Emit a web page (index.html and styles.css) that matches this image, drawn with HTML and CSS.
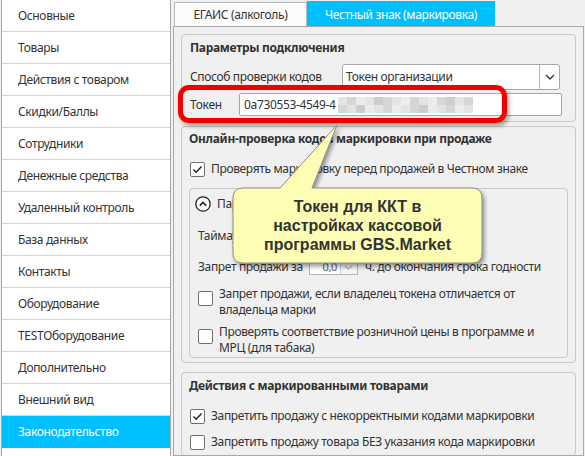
FILE: index.html
```html
<!DOCTYPE html>
<html lang="ru">
<head>
<meta charset="utf-8">
<link rel="stylesheet" href="styles.css">
</head>
<body>
<div class="app">
  <nav class="side">
    <div class="item">Основные</div>
    <div class="item">Товары</div>
    <div class="item">Действия с товаром</div>
    <div class="item">Скидки/Баллы</div>
    <div class="item">Сотрудники</div>
    <div class="item">Денежные средства</div>
    <div class="item">Удаленный контроль</div>
    <div class="item">База данных</div>
    <div class="item">Контакты</div>
    <div class="item">Оборудование</div>
    <div class="item">TESTОборудование</div>
    <div class="item">Дополнительно</div>
    <div class="item">Внешний вид</div>
    <div class="item sel">Законодательство</div>
  </nav>
  <main class="main">
    <div class="tabs">
      <div class="tab">ЕГАИС (алкоголь)</div>
      <div class="tab act">Честный знак (маркировка)</div>
    </div>
    <div class="panel">
      <section class="grp g1">
        <div class="gt">Параметры подключения</div>
        <div class="row r-combo">
          <span class="lbl lbl-w1">Способ проверки кодов</span>
          <div class="combo">
            <span class="combo-val">Токен организации</span>
            <span class="dd"><svg width="10" height="6" viewBox="0 0 10 6"><polyline points="1,1 5,5 9,1" fill="none" stroke="#333" stroke-width="1.4"/></svg></span>
          </div>
        </div>
        <div class="row r-token">
          <span class="lbl lbl-w2">Токен</span>
          <div class="input">0a730553-4549-4<span class="blur"><i class="c1"></i><i class="c2"></i><i class="c3"></i><i class="c1"></i><i class="c4"></i><i class="c2"></i><i class="c1"></i><i class="c3"></i><i class="c2"></i><i class="c1"></i><i class="c3"></i><i class="c2"></i><i class="c4"></i><i class="c1"></i><i class="c2"></i><i class="c2"></i><i class="c1"></i><i class="c4"></i><i class="c3"></i><i class="c1"></i><i class="c2"></i><i class="c3"></i><i class="c1"></i><i class="c2"></i><i class="c4"></i><i class="c3"></i><i class="c1"></i><i class="c2"></i><i class="c3"></i><i class="c1"></i></span></div>
        </div>
      </section>

      <section class="grp g2">
        <div class="gt">Онлайн-проверка кодов маркировки при продаже</div>
        <div class="row crow first">
          <span class="cb on"><svg width="11" height="9" viewBox="0 0 11 9"><polyline points="1.5,4.5 4.2,7.2 9.5,1.5" fill="none" stroke="#222" stroke-width="1.4"/></svg></span>
          <span>Проверять маркировку перед продажей в Честном знаке</span>
        </div>
        <div class="inner">
          <div class="row exp">
            <span class="circ"><svg width="16" height="16" viewBox="0 0 16 16"><circle cx="8" cy="8" r="7.2" fill="#fff" stroke="#222" stroke-width="1.3"/><polyline points="4.8,9.6 8,6.4 11.2,9.6" fill="none" stroke="#222" stroke-width="1.6"/></svg></span>
            <span>Параметры</span>
          </div>
          <div class="row tm">Таймаут</div>
          <div class="row zp">
            <span>Запрет продажи за</span>
            <span class="spin"><span class="spin-val">0,0</span><span class="spin-btn"><svg width="9" height="5" viewBox="0 0 9 5"><polyline points="1,1 4.5,4 8,1" fill="none" stroke="#b0b0b0" stroke-width="1.3"/></svg></span></span>
            <span>ч. до окончания срока годности</span>
          </div>
          <div class="row mrow cb2">
            <span class="cb top"></span>
            <span>Запрет продажи, если владелец токена отличается от<br>владельца марки</span>
          </div>
          <div class="row mrow cb3">
            <span class="cb top"></span>
            <span>Проверять соответствие розничной цены в программе и<br>МРЦ (для табака)</span>
          </div>
        </div>
      </section>

      <section class="grp g3">
        <div class="gt">Действия с маркированными товарами</div>
        <div class="row crow first">
          <span class="cb on"><svg width="11" height="9" viewBox="0 0 11 9"><polyline points="1.5,4.5 4.2,7.2 9.5,1.5" fill="none" stroke="#222" stroke-width="1.4"/></svg></span>
          <span>Запретить продажу с некорректными кодами маркировки</span>
        </div>
        <div class="row crow second">
          <span class="cb"></span>
          <span>Запретить продажу товара БЕЗ указания кода маркировки</span>
        </div>
      </section>
    </div>
  </main>

  <div class="highlight"></div>
  <div class="callout">
    <svg class="callout-shape" width="265" height="150" viewBox="0 0 265 150">
      <path d="M15,68 L52,68 L109,5 L84,68 L244,68 Q254,68 254,78 L254,133 Q254,143 244,143 L15,143 Q5,143 5,133 L5,78 Q5,68 15,68 Z" fill="#fdfdb4" stroke="#8c8c8c" stroke-width="1"/>
    </svg>
    <div class="callout-text">Токен для ККТ в<br>настройках кассовой<br>программы GBS.Market</div>
  </div>
</div>
</body>
</html>
```

FILE: styles.css
```css
* { box-sizing: border-box; }

body {
  margin: 0;
  width: 585px;
  height: 456px;
  overflow: hidden;
  background: #f0f0f0;
  font-family: "Noto Sans", "Open Sans", sans-serif;
  font-size: 12px;
  letter-spacing: -0.35px;
  color: #333;
}

.app {
  position: relative;
  display: flex;
  height: 456px;
}

.side {
  flex: none;
  width: 170px;
  margin-left: 1px;
  border-left: 1px solid #a9a9a9;
  border-right: 1px solid #a9a9a9;
  background: #fff;
}

.item {
  height: 32px;
  border-bottom: 1px solid #d6d6d6;
  padding-left: 16px;
  display: flex;
  align-items: center;
  white-space: nowrap;
}

.item.sel {
  background: #00bfff;
  color: #fff;
  border-bottom-color: #00bfff;
}

.main {
  flex: 1;
  min-width: 0;
  margin-left: 2px;
  display: flex;
  flex-direction: column;
}

.tabs {
  display: flex;
  align-items: flex-end;
  height: 26px;
  padding-left: 1px;
}

.tab {
  width: 133px;
  height: 24px;
  border: 1px solid #b9b9b9;
  border-bottom: none;
  background: #fbfbfb;
  display: flex;
  align-items: center;
  justify-content: center;
  white-space: nowrap;
}

.tab.act {
  width: 188px;
  height: 25px;
  background: #00bfff;
  border-color: #00bfff;
  color: #fff;
}

.panel {
  flex: 1;
  margin-right: 1px;
  border: 1px solid #a9a9a9;
  padding: 7px 7px 0 7px;
  overflow: hidden;
  background: #f0f0f0;
}

.grp {
  border: 1px solid #c8c8c8;
  border-radius: 4px;
  background: #f0f0f0;
}

.gt {
  font-weight: 700;
  line-height: 16px;
  white-space: nowrap;
  letter-spacing: -0.3px;
}

.row {
  display: flex;
  align-items: center;
  line-height: 16px;
  white-space: nowrap;
}

.g1 { padding: 5px 7px 5px 8px; }

.r-combo { margin-top: 8px; height: 26px; }
.r-token { margin-top: 3px; height: 23px; }

.lbl-w1 { width: 152px; flex: none; }
.lbl-w2 { width: 49px; flex: none; }

.combo {
  width: 218px;
  height: 26px;
  border: 1px solid #a6a6a6;
  border-radius: 3px;
  background: #fff;
  display: flex;
  align-items: center;
}

.combo-val { padding-left: 3px; }

.dd {
  margin-left: auto;
  width: 20px;
  height: 100%;
  border-left: 1px solid #b8b8b8;
  display: flex;
  align-items: center;
  justify-content: center;
}

.input {
  width: 323px;
  height: 23px;
  border: 1px solid #a6a6a6;
  border-radius: 2px;
  background: #fff;
  padding-left: 4px;
  display: flex;
  align-items: center;
}

.blur {
  display: inline-grid;
  grid-template-columns: repeat(15, 9px);
  grid-template-rows: 8px 8px;
  margin-left: 2px;
}

.blur i { display: block; }
.c1 { background: #e4e4e4; }
.c2 { background: #d6d6d6; }
.c3 { background: #ececec; }
.c4 { background: #cdcdcd; }

.g2 { margin-top: 4px; padding: 4px 7px 4px 7px; }

.crow.first { margin-top: 14px; }
.crow.second { margin-top: 10px; }

.cb {
  flex: none;
  width: 15px;
  height: 15px;
  margin-left: 1px;
  margin-right: 6px;
  border: 1px solid #707070;
  border-radius: 2px;
  background: #fff;
  display: flex;
  align-items: center;
  justify-content: center;
}

.inner {
  margin-top: 11px;
  border: 1px solid #c8c8c8;
  border-radius: 4px;
  padding: 7px 8px 1px 8px;
}

.exp { margin-left: -3px; }
.circ { width: 16px; height: 16px; margin-right: 6px; display: flex; }

.tm { margin-top: 16px; }
.zp { margin-top: 15px; }

.spin {
  width: 49px;
  height: 16px;
  margin: 0 7px 0 6px;
  border: 1px solid #b4b4b4;
  background: #fff;
  display: flex;
  align-items: center;
}

.spin-val {
  flex: 1;
  text-align: right;
  padding-right: 3px;
  color: #56657d;
  font-size: 11px;
}

.spin-btn {
  width: 17px;
  height: 100%;
  border-left: 1px solid #c8c8c8;
  background: #f4f4f4;
  display: flex;
  align-items: center;
  justify-content: center;
}

.mrow { align-items: flex-start; }
.mrow .cb { margin-top: 5px; margin-left: 0; }
.cb2 { margin-top: 11px; }
.cb3 { margin-top: 6px; }

.g3 { margin-top: 9px; padding: 5px 7px 5px 7px; }

.highlight {
  position: absolute;
  left: 178px;
  top: 85px;
  width: 329px;
  height: 38px;
  border: 5px solid #f20000;
  border-radius: 11px;
  box-shadow: 2px 3px 4px rgba(0, 0, 0, 0.35);
}

.callout {
  position: absolute;
  left: 228px;
  top: 120px;
  width: 265px;
  height: 150px;
}

.callout-shape {
  display: block;
  filter: drop-shadow(2px 3px 2px rgba(0, 0, 0, 0.4));
}

.callout-text {
  position: absolute;
  left: 5px;
  top: 68px;
  width: 249px;
  height: 75px;
  display: flex;
  align-items: center;
  justify-content: center;
  text-align: center;
  font-family: "Liberation Sans", Arial, sans-serif;
  font-weight: 700;
  font-size: 16px;
  letter-spacing: 0;
  line-height: 19px;
  color: #333;
}
```
